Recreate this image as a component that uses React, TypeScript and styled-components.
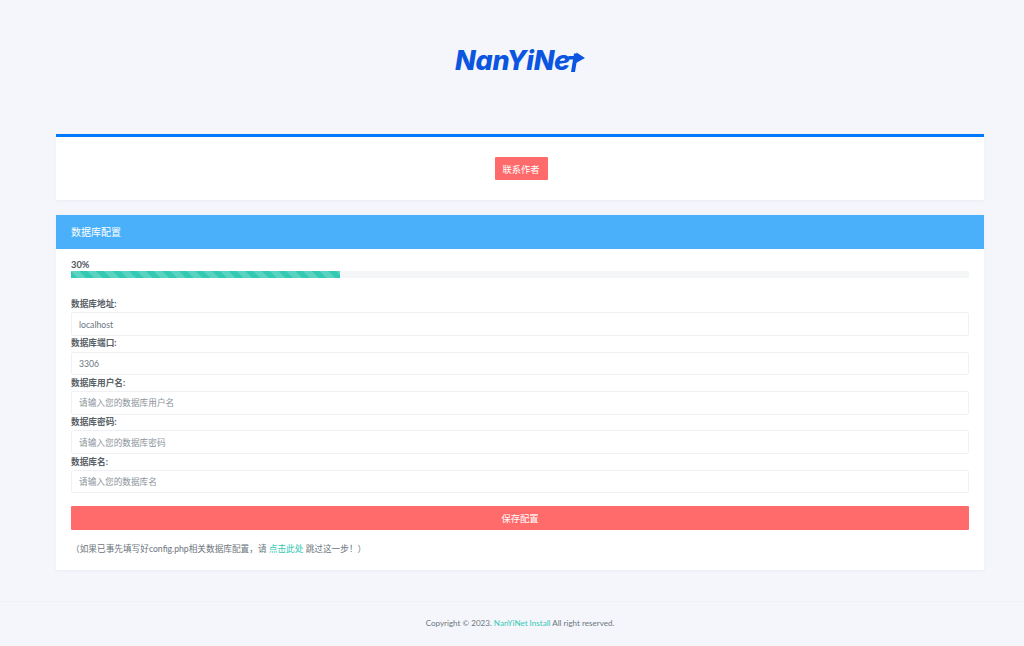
import React from "react";
import styled, { createGlobalStyle } from "styled-components";

const Global = createGlobalStyle`
  html, body { margin: 0; padding: 0; background: #f4f6fb; }
  body { font-family: Lato, "Noto Sans CJK SC", sans-serif; font-size: 8.67px; color: #6c757d; overflow: hidden; }
  * { box-sizing: border-box; }
`;

const Page = styled.div`
  width: 1024px;
  height: 646px;
  display: flex;
  flex-direction: column;
`;
const LogoRow = styled.header`
  height: 134px;
  padding: 43px 40px 0 56px;
  display: flex;
  justify-content: center;
`;
const Logo = styled.div`
  display: flex;
  align-items: flex-start;
  height: 36px;
  color: #0b55e0;
  font-family: Inter, sans-serif;
  font-weight: 800;
  font-style: italic;
  font-size: 27px;
  line-height: 36px;
  letter-spacing: -0.2px;
`;
const LogoMark = styled.svg`
  display: block;
  margin: 8px 0 0 -3px;
`;
const Main = styled.main`
  padding: 0 40px 0 56px;
  display: flex;
  flex-direction: column;
  gap: 15px;
`;
const TopCard = styled.section`
  height: 66px;
  background: #fff;
  border-top: 3px solid #007bff;
  box-shadow: 0 1px 3px rgba(40, 50, 90, 0.05);
  display: flex;
  align-items: center;
  justify-content: center;
`;
const Btn = styled.button<{ $block?: boolean }>`
  display: block;
  width: ${(p) => (p.$block ? "100%" : "53px")};
  height: 23.6px;
  margin-left: ${(p) => (p.$block ? "0" : "2px")};
  padding: 0;
  border: 0;
  border-radius: 1px;
  background: #ff6b6b;
  color: #fff;
  font-family: inherit;
  font-size: 9.3px;
  font-weight: 400;
`;
const Card = styled.section`
  height: 355px;
  background: #fff;
  box-shadow: 0 1px 3px rgba(40, 50, 90, 0.05);
`;
const CardHead = styled.h2`
  margin: 0;
  height: 34px;
  padding: 0 15px;
  background: #4ab0f9;
  color: #fff;
  font-size: 10px;
  font-weight: 400;
  line-height: 34px;
`;
const CardBody = styled.div`
  padding: 10px 15px 0;
`;
const ProgressLabel = styled.div`
  height: 12px;
  font-size: 9.3px;
  line-height: 12px;
  font-weight: 700;
  color: #50575e;
`;
const Track = styled.div`
  height: 7px;
  background: #f4f5f7;
  margin-bottom: 19px;
`;
const Fill = styled.div`
  height: 100%;
  background-color: #34c9b4;
  background-image: linear-gradient(
    45deg,
    rgba(255, 255, 255, 0.18) 25%,
    transparent 25%,
    transparent 50%,
    rgba(255, 255, 255, 0.18) 50%,
    rgba(255, 255, 255, 0.18) 75%,
    transparent 75%,
    transparent
  );
  background-size: 16.6px 16.6px;
`;
const Field = styled.div`
  height: 39.4px;
`;
const Label = styled.label`
  display: block;
  height: 15.3px;
  font-size: 8.67px;
  line-height: 13.5px;
  font-weight: 700;
  color: #5a6268;
`;
const Input = styled.input`
  display: block;
  width: 100%;
  height: 23.6px;
  padding: 0 7px;
  background: #fff;
  border: 1px solid #f0f1f4;
  border-radius: 2px;
  font-family: inherit;
  font-size: 8.67px;
  color: #6c757d;
  outline: none;
  &::placeholder { color: #8b939b; opacity: 1; }
`;
const SaveWrap = styled.div`
  margin-top: 12px;
`;
const Note = styled.p`
  margin: 12.4px 0 0;
  font-size: 8.67px;
  line-height: 14px;
  color: #6c757d;
`;
const TealLink = styled.a`
  color: #34c9b4;
  text-decoration: none;
`;
const Footer = styled.footer`
  margin-top: 31px;
  height: 45px;
  padding: 0 40px 0 56px;
  border-top: 1px solid #eff1f6;
  text-align: center;
  font-size: 8.06px;
  line-height: 42px;
  color: #6c757d;
`;

const fields = [
  { label: "数据库地址:", value: "localhost" },
  { label: "数据库端口:", value: "3306" },
  { label: "数据库用户名:", placeholder: "请输入您的数据库用户名" },
  { label: "数据库密码:", placeholder: "请输入您的数据库密码" },
  { label: "数据库名:", placeholder: "请输入您的数据库名" },
];

export default function App() {
  return (
    <Page>
      <Global />
      <LogoRow>
        <Logo>
          NanYiNe
          <LogoMark width="18" height="22" viewBox="0 0 18 22" aria-hidden="true">
            <path d="M1.5 5 H9.5 L9.5 1.5 L18 7 L9 12 L9.3 8.5 H1 Z" fill="#0b55e0" />
            <path d="M7 2.5 H11 L8 21 H4 Z" fill="#0b55e0" />
          </LogoMark>
        </Logo>
      </LogoRow>
      <Main>
        <TopCard>
          <Btn>联系作者</Btn>
        </TopCard>
        <Card>
          <CardHead>数据库配置</CardHead>
          <CardBody>
            <ProgressLabel>30%</ProgressLabel>
            <Track>
              <Fill style={{ width: "30%" }} />
            </Track>
            {fields.map((f) => (
              <Field key={f.label}>
                <Label>{f.label}</Label>
                <Input defaultValue={f.value} placeholder={f.placeholder} />
              </Field>
            ))}
            <SaveWrap>
              <Btn $block>保存配置</Btn>
            </SaveWrap>
            <Note>
              （如果已事先填写好config.php相关数据库配置，请 <TealLink href="#">点击此处</TealLink> 跳过这一步！）
            </Note>
          </CardBody>
        </Card>
      </Main>
      <Footer>
        Copyright © 2023. <TealLink href="#">NanYiNet Install</TealLink> All right reserved.
      </Footer>
    </Page>
  );
}
